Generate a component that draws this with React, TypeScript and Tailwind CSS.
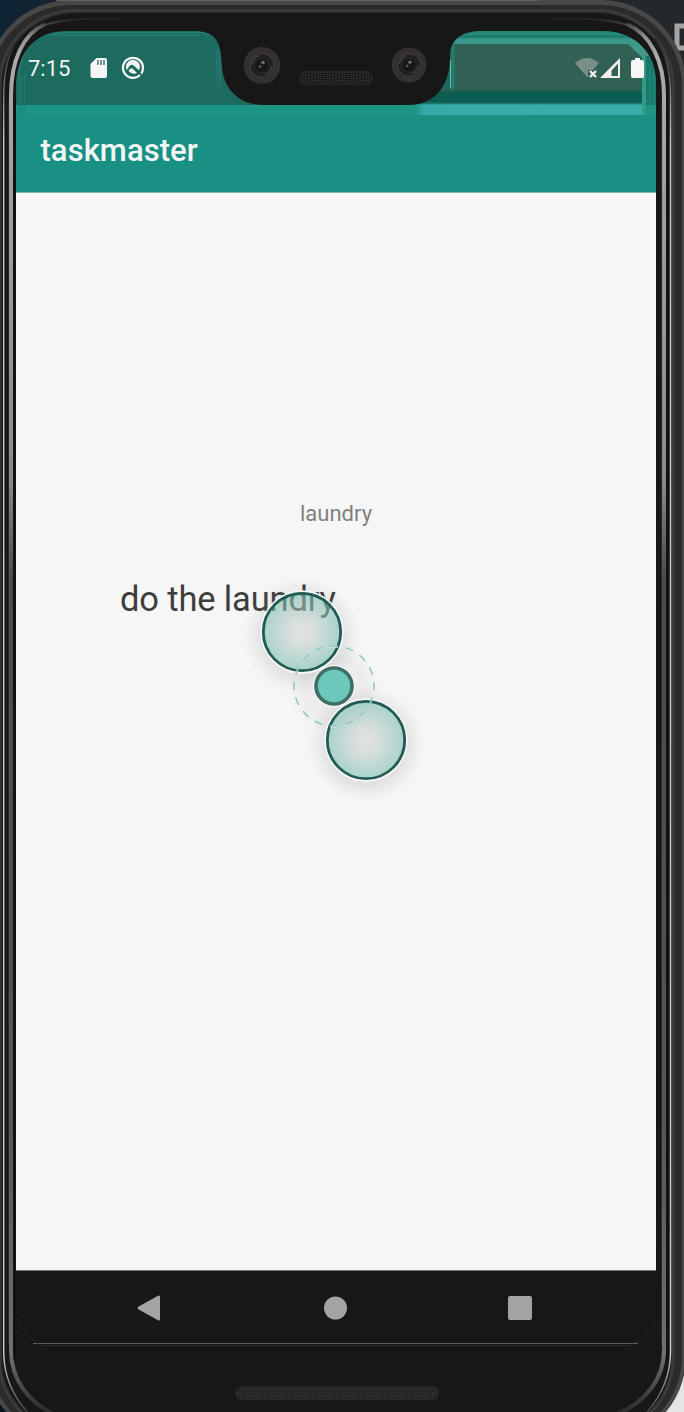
import React from "react";

function DeviceFrame() {
  return (
    <svg className="absolute inset-0 h-full w-full" viewBox="0 0 684 1412" fill="none" aria-hidden="true">
      <defs>
        <linearGradient id="rail" x1="0" y1="0" x2="0" y2="1412" gradientUnits="userSpaceOnUse">
          <stop offset="0.012" stopColor="#171717" />
          <stop offset="0.016" stopColor="#3c3c3c" />
          <stop offset="0.026" stopColor="#909090" />
          <stop offset="0.04" stopColor="#aaa" />
          <stop offset="0.12" stopColor="#a2a2a2" />
          <stop offset="0.34" stopColor="#8b8b8b" />
          <stop offset="0.41" stopColor="#494949" />
          <stop offset="0.8" stopColor="#55555a" />
          <stop offset="0.96" stopColor="#707070" />
          <stop offset="1" stopColor="#2b2b2e" />
        </linearGradient>
        <linearGradient id="edge" x1="0" y1="0" x2="0" y2="1412" gradientUnits="userSpaceOnUse">
          <stop offset="0.03" stopColor="#2a2a2a" />
          <stop offset="0.1" stopColor="#c9c9c9" />
          <stop offset="0.96" stopColor="#cfcfcf" />
          <stop offset="1" stopColor="#444" />
        </linearGradient>
        <linearGradient id="desk" x1="0" y1="0" x2="684" y2="0" gradientUnits="userSpaceOnUse">
          <stop offset="0" stopColor="#0d2436" />
          <stop offset="0.1" stopColor="#18222c" />
          <stop offset="0.8" stopColor="#24272b" />
        </linearGradient>
      </defs>
      <rect width="684" height="1412" fill="url(#desk)" />
      <path d="M660 1350h24v62h-24z" fill="#e5e5e5" />
      <path d="M0 1380h20v32H0z" fill="#0a1422" />
      <path d="M684 26h-7v22h7" stroke="#a5a5a5" strokeWidth="5" />
      <rect x="-14" y="0" width="700" height="1442" rx="85" fill="#484848" />
      <path d="M56 .5h482" stroke="#606060" />
      <rect x="-10" y="5" width="692" height="1433" rx="81" fill="#2b2b2b" />
      <rect x="-1" y="10.500" width="674" height="1424" rx="76" stroke="#3b3b3b" strokeWidth="3" />
      <rect x="2" y="13" width="669" height="1420" rx="74" fill="#171717" />
      <path d="M19 38C8 52 3.700 70 3.700 96V1352c0 24 10 46 27 64M655 38c11 14 15.500 32 15.500 58v1256c0 24-10 46-27 64" stroke="url(#edge)" strokeWidth="1.400" />
      <path d="M45 24C23 34 11 60 11 96v1254c0 29 17 53 45 65M627 24c23 10 37 36 37 72v1254c0 29-19 54-50 65" stroke="url(#rail)" strokeWidth="4" />
      <path d="M120 18.500Q66 17 42 26M552 18.500Q606 17 630 26" stroke="url(#rail)" strokeWidth="2" />
      <path d="M9 100V1345M662 100V1345" stroke="#777" opacity=".35" />
      <path d="M14.500 100V1360M667.500 100V1360" stroke="#101010" strokeWidth="2" />
    </svg>
  );
}

function Camera({ className }: { className: string }) {
  return (
    <svg className={className} viewBox="0 0 38 38" aria-hidden="true">
      <circle cx="19" cy="19" r="18.500" fill="#34302d" />
      <circle cx="19" cy="19" r="12" fill="#202022" stroke="#45413f" />
      <circle cx="19" cy="19" r="7.500" fill="#171719" stroke="#302e2e" />
      <path d="M9 18q1-7 7-9M29 20q-1 6-7 8" fill="none" stroke="#55555c" />
      <circle cx="20" cy="16" r="1.800" fill="#756b68" />
      <circle cx="17" cy="20" r="1.500" fill="#60504c" />
    </svg>
  );
}

function StatusGlow() {
  return (
    <svg className="absolute inset-0 h-[84px] w-[640px]" viewBox="16 31 640 84" aria-hidden="true">
      <defs>
        <clipPath id="screenShape">
          <path d="M16 115V82C18 50 38 31 66 31H604C637 32 655 54 656 82V115z" />
        </clipPath>
        <linearGradient id="topGlow" x1="0" y1="0" x2="0" y2="22" gradientTransform="translate(0 31)" gradientUnits="userSpaceOnUse">
          <stop offset="0" stopColor="#1c8473" />
          <stop offset=".15" stopColor="#2b8b7c" />
          <stop offset=".25" stopColor="#187866" />
          <stop offset=".38" stopColor="#3a9688" />
          <stop offset="1" stopColor="#439b8d" />
        </linearGradient>
        <linearGradient id="lowShade" x1="0" y1="0" x2="0" y2="1">
          <stop offset="0" stopColor="#306154" />
          <stop offset=".25" stopColor="#0c5d50" />
          <stop offset=".8" stopColor="#0a5d52" />
          <stop offset="1" stopColor="#328f87" />
        </linearGradient>
        <linearGradient id="glowFade" x1="0" y1="0" x2="1" y2="0">
          <stop offset="0" stopColor="#1b9384" />
          <stop offset=".04" stopColor="#36aaa9" />
          <stop offset="1" stopColor="#37adac" />
        </linearGradient>
        <pattern id="mesh" width="3" height="4" patternUnits="userSpaceOnUse">
          <path fill="#1a1a1a" d="M0 0h3v4H0z" />
          <path fill="#424242" d="M0 0h1v1H0zM2 2h1v1H2z" />
        </pattern>
      </defs>
      <g clipPath="url(#screenShape)">
        <path fill="#1d6b5f" d="M16 31h640v75H16z" />
        <path fill="#1c9585" d="M16 105h640v10H16z" />
        <path d="M19 115V75Q22 34 63 32.500H203Q219 35 220 52V87M50 35H200" fill="none" stroke="#238878" />
        <path d="M22 115V75M25 115V70M203 33l12 11" fill="none" stroke="#217e71" />
        <path d="M217 49V87" stroke="#286f75" strokeWidth="3" />
        <path fill="#306154" d="M450 43h206v50H450z" />
        <path fill="url(#topGlow)" d="M450 31h206v40l-12-12-16-15H450z" />
        <path fill="url(#lowShade)" d="M400 89h242v16H400z" />
        <path fill="url(#glowFade)" d="M415 104.500h227V115H415z" />
        <path fill="#147a6b" d="M645 56h11v49h-11z" />
        <path fill="#20a38e" d="M642 57h4v58h-4z" />
        <path d="M645.500 57v58M643 48l3 9" stroke="#658470" />
        <path d="M650 67v48M654 71v44" stroke="#28907f" />
        <path d="M453 43v47" stroke="#20816f" strokeWidth="3" />
        <path d="M450.500 60v28" stroke="#62c5ad" />
      </g>
      <path fill="#171717" d="M198 31H477C456 33 450 44 450 57C450 87 434 105 408 105H264C238 105 224 88 222 68C221 43 217 33 198 31z" />
      <rect x="299.500" y="71.500" width="73" height="13" rx="6.500" fill="url(#mesh)" stroke="#282828" />
    </svg>
  );
}

function StatusBar() {
  return (
    <div className="relative h-[84px] shrink-0">
      <StatusGlow />
      <div className="relative flex h-[74px] items-center pl-3 pr-[12px]">
        <span className="w-[62px] pt-px text-[22px] leading-6 text-[#f0f4f3]">7:15</span>
        <svg className="h-5 w-[18px]" viewBox="0 0 18 20" aria-hidden="true">
          <path fill="#f5f5f5" d="M6.500 0H15q2 0 2 2v16q0 2-2 2H2.500q-2 0-2-2V6z" />
          <path d="M8 2v5m3-5v5m3-5v5" stroke="#1d6b5f" strokeWidth="1.300" />
        </svg>
        <svg className="ml-[13px] h-6 w-6 -translate-y-px" viewBox="0 0 24 24" fill="none" aria-hidden="true">
          <path d="M19 20A10 10 0 1 1 22 13q-.3 4-2 6" stroke="#f5f5f5" strokeWidth="2.300" />
          <path d="M5 12a7 7 0 1 1 13 3.500L12 10q-3-1-5 3.500L5.500 15z" fill="#f5f5f5" />
          <path d="M7.500 16q2-4 4.500-2l4 4q-5 2-8.500-2z" fill="#f5f5f5" />
          <path d="M13 12l8 8.500" stroke="#1d6b5f" strokeWidth="1.200" />
        </svg>
        <Camera className="ml-[98px] h-[38px] w-[38px] -translate-y-[2.5px]" />
        <Camera className="ml-[110px] h-9 w-9 -translate-y-[3px]" />
        <div className="ml-auto flex items-center">
          <svg className="h-5 w-[24px]" viewBox="0 0 24 20" aria-hidden="true">
            <path d="M0 5Q12-5 24 5l-6 7h-5v7h-1z" fill="#778f87" />
            <path d="M15 13l6 6m0-6l-6 6" stroke="#f5eeee" strokeWidth="2.400" />
          </svg>
          <svg className="ml-[1px] h-5 w-5" viewBox="0 0 20 20" aria-hidden="true">
            <path fillRule="evenodd" fill="#f5eeee" d="M20 0v20H0zM18 5.500l-6.500 7V18H18z" />
          </svg>
          <svg className="ml-[11px] h-5 w-[13px]" viewBox="0 0 13 20" aria-hidden="true">
            <path fill="#f7f7f7" d="M4 0h5v2h2q2 0 2 2v14q0 2-2 2H2q-2 0-2-2V4q0-2 2-2h2z" />
          </svg>
        </div>
      </div>
    </div>
  );
}

function PinchGesture() {
  return (
    <svg className="absolute left-[204px] top-[355px] h-[276px] w-[240px]" viewBox="220 548 240 276" aria-hidden="true">
      <defs>
        <radialGradient id="touch">
          <stop offset="0" stopColor="#dcdcdc" stopOpacity=".52" />
          <stop offset=".3" stopColor="#ccd6d4" stopOpacity=".52" />
          <stop offset="1" stopColor="#73c4b6" stopOpacity=".52" />
        </radialGradient>
        <radialGradient id="shadow">
          <stop offset="0" stopColor="#777" stopOpacity=".1" />
          <stop offset=".5" stopColor="#777" stopOpacity=".14" />
          <stop offset=".68" stopColor="#777" stopOpacity=".16" />
          <stop offset="1" stopColor="#999" stopOpacity="0" />
        </radialGradient>
      </defs>
      <circle cx="302" cy="636" r="59" fill="url(#shadow)" />
      <circle cx="366" cy="744" r="59" fill="url(#shadow)" />
      <circle cx="334" cy="689" r="46" fill="url(#shadow)" opacity=".5" />
      {[{ x: 302, y: 632 }, { x: 366, y: 740 }].map((p) => (
        <g key={p.x}>
          <circle cx={p.x} cy={p.y} r="39" fill="url(#touch)" />
          <circle cx={p.x} cy={p.y} r="40.700" fill="none" stroke="#f8f8f8" strokeWidth="1.900" />
          <circle cx={p.x} cy={p.y} r="38.700" fill="none" stroke="#205c52" strokeWidth="2.800" />
        </g>
      ))}
      <circle cx="334" cy="687" r="40" fill="none" stroke="#e3f0ed" strokeDasharray="8 7.700" strokeDashoffset="4" />
      <circle cx="334" cy="686" r="40" fill="none" stroke="#91c9bf" strokeWidth="1.600" strokeDasharray="8 7.700" strokeDashoffset="4" />
      <circle cx="334" cy="686" r="21" fill="#f7f7f7" />
      <circle cx="334" cy="686" r="18" fill="#6bc8ba" stroke="#3f6f66" strokeWidth="3.700" />
    </svg>
  );
}

function NavBar() {
  return (
    <nav className="relative h-[76px] shrink-0 border-t border-[#777] bg-[#171717]">
      <svg className="absolute inset-0 h-[76px] w-[640px]" viewBox="0 0 640 76" fill="none" aria-hidden="true">
        <path d="M17 72.500H622" stroke="#606060" />
        <path d="M26 74.500H614" stroke="#2b2b2b" />
        <path d="M0 47l5 9 10 11 7 6M640 48l-4 12-9 9-11 4" stroke="#343434" strokeWidth=".7" strokeDasharray="2 1" />
      </svg>
      <div className="relative flex items-center pl-[121px] pt-6">
        <svg className="h-[26px] w-6" viewBox="0 0 24 26" aria-label="Back">
          <path d="M21.500.6 1.200 11.800q-1.300 1.200 0 2.400L21.500 25.400Q23 26 23 24V2Q23 0 21.500.6z" fill="#a3a3a3" />
        </svg>
        <div className="ml-[163px] h-[23px] w-[23px] -translate-y-[0.5px] rounded-full bg-[#a3a3a3]" />
        <div className="ml-[161px] h-6 w-6 rounded-[2px] bg-[#a3a3a3]" />
      </div>
    </nav>
  );
}

export default function App() {
  return (
    <div className="relative h-[1412px] w-[684px] overflow-hidden bg-[#171717] font-['Roboto',sans-serif]">
      <DeviceFrame />
      <div className="relative ml-4 flex w-[640px] flex-col pt-[31px]">
        <StatusBar />
        <header className="flex h-[78px] shrink-0 items-center border-b border-[#7eb8ae] bg-[#189083] pl-[24.5px] pb-[5px]">
          <h1 className="text-[31px] font-medium leading-9 tracking-[0.05px] text-[#f4f6f6]">taskmaster</h1>
        </header>
        <main className="relative flex h-[1077px] shrink-0 flex-col bg-[#f6f6f6]">
          <div className="pt-[309px] text-center text-[22px] leading-6 tracking-[0.02px] text-[#808080]">laundry</div>
          <div className="pl-[104px] pt-[52px] text-[34.5px] leading-[42px] tracking-[-0.15px] text-[#3d3d3d]">do the laundry</div>
          <PinchGesture />
        </main>
        <NavBar />
        <div className="flex justify-center pl-[2px] pt-[40px]">
          <svg className="h-[14px] w-[204px]" viewBox="0 0 204 14" aria-hidden="true">
            <defs>
              <pattern id="speakerMesh" width="3" height="4" patternUnits="userSpaceOnUse">
                <path d="M0 0h3v4H0z" fill="#222" />
                <path d="M0 0h1v1H0zM2 2h1v1H2z" fill="#444" />
              </pattern>
            </defs>
            <rect x=".5" y=".5" width="203" height="13" rx="6" fill="url(#speakerMesh)" stroke="#282828" />
          </svg>
        </div>
      </div>
    </div>
  );
}
